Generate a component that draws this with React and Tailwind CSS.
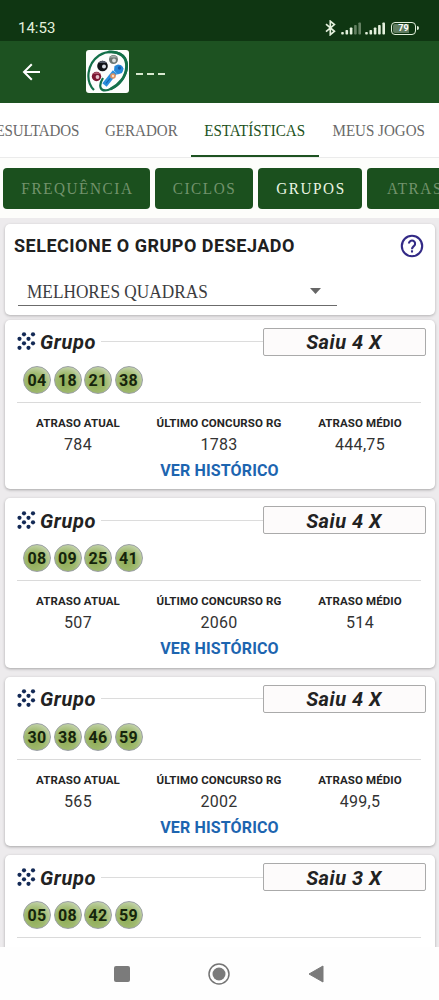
import React from 'react';

const TABS = [
    { label: 'RESULTADOS', box: 'w-[92px] ml-[-14px]', text: 'tracking-[-0.2px]' },
    { label: 'GERADOR', box: 'w-[73px] ml-[27px]', text: '' },
    { label: 'ESTATÍSTICAS', box: 'w-[128px] ml-[13px]', text: '', active: true },
    { label: 'MEUS JOGOS', box: 'w-[92px] ml-[14px]', text: '' },
];

const CHIPS = [
    { label: 'FREQUÊNCIA', box: 'w-[147px]' },
    { label: 'CICLOS', box: 'w-[98px]' },
    { label: 'GRUPOS', box: 'w-[104px]', active: true },
    { label: 'ATRASOS', box: 'w-[117px]' },
];

const GROUPS = [
    { id: 1, balls: ['04', '18', '21', '38'], hits: 4, current: '784', last: '1783', average: '444,75' },
    { id: 2, balls: ['08', '09', '25', '41'], hits: 4, current: '507', last: '2060', average: '514' },
    { id: 3, balls: ['30', '38', '46', '59'], hits: 4, current: '565', last: '2002', average: '499,5' },
    { id: 4, balls: ['05', '08', '42', '59'], hits: 3 },
];

const Signal = ({ level }) => (
    <svg width="20" height="13" viewBox="0 0 20 13" fill="#e3f0dc">
        {[2.5, 4.5, 7, 9.5, 12].map((h, i) => (
            <rect key={h} x={i * 4.3 + 0.2} y={12.5 - h} width="2.6" height={h} rx="0.8" opacity={i < level ? 1 : 0.4} />
        ))}
    </svg>
);

const StatusBar = () => (
    <div className="h-[40.5px] shrink-0 bg-[#0f3612] flex items-start justify-between pl-[18px] pr-[20px] pt-[18px] text-[#e3f0dc]">
        <span className="text-[15px] leading-[20px]">14:53</span>
        <div className="flex items-center h-[20px]">
            <svg className="mr-[5px]" width="11" height="16" viewBox="0 0 11 16" fill="none" stroke="#e3f0dc" strokeWidth="1.7">
                <path d="M1 4.2 9.4 11.3 5.3 14.7V1.2L9.4 4.6 1 11.7" />
            </svg>
            <Signal level={3} />
            <span className="w-[4.5px]" />
            <Signal level={5} />
            <div className="ml-[6px] w-[25px] h-[13px] border-[1.5px] border-[#e3f0dc] rounded-[4px] p-[1px]">
                <div className="h-full w-full rounded-[2px] bg-[linear-gradient(90deg,#5f7c60_75%,transparent_75%)] text-[9px] leading-[9px] font-bold text-center text-white">79</div>
            </div>
            <span className="ml-[1px] w-[2px] h-[4px] rounded-r bg-[#e3f0dc]" />
        </div>
    </div>
);

const Logo = () => (
    <svg width="43" height="43" viewBox="0 0 43 43">
        <rect width="43" height="43" rx="3" fill="#fdfdfc" />
        <path d="M8 40C-1 31 1 14 13 5.5C23-.5 38 1 40.500 12C43 24 33 37 22 40C14 42 12 36 17 28" fill="none" stroke="#14704a" strokeWidth="2.2" />
        <path d="M23 1.800C34 1.500 41 7 40.500 17C40 27 33 35 25 38.700" fill="none" stroke="#14704a" strokeWidth="2.8" strokeLinecap="round" />
        <g>
            <circle cx="27.5" cy="9.5" r="4.500" fill="#6b7773" />
            <path d="M23.500 7.500Q27.500 3.500 31.500 7.500Z" fill="#a4b0ac" />
            <circle cx="28" cy="10.500" r="1.900" fill="#dce0df" />
            <circle cx="16.500" cy="16" r="5.300" fill="#121318" />
            <path d="M12 13Q16.500 8.500 21 13Z" fill="#545967" />
            <circle cx="18" cy="16.500" r="2" fill="#d9dde4" />
            <circle cx="10.500" cy="26.500" r="4.700" fill="#7c1732" />
            <path d="M6.500 24Q10.500 20 14.500 24Z" fill="#a9546b" />
            <circle cx="11.500" cy="27" r="1.900" fill="#e4c2ca" />
        </g>
        <path d="M18.500 35 29 22" stroke="#2c8fdd" strokeWidth="5.500" />
        <path d="M28.500 16 32 14.500 35.500 16 37.500 18.500 36 23 31.500 24.500 28 20.500Z" fill="#2c8fdd" />
        <circle cx="33" cy="19" r="4.300" fill="#2787d8" />
        <circle cx="33.500" cy="18" r="1.700" fill="#1859a5" />
        <path d="M20 33.500 24 28.500" stroke="#1764ae" strokeWidth="1.200" />
        <circle cx="27" cy="26" r="2.800" fill="#dc9060" />
        <circle cx="27" cy="26" r="1.200" fill="#f6e0cb" />
    </svg>
);

const AppBar = () => (
    <div className="h-[62.5px] shrink-0 bg-[#1d5221] flex items-center pl-[22px]">
        <svg width="19" height="18" viewBox="0 0 19 18" fill="none" stroke="#fff" strokeWidth="2">
            <path d="M18 9H2M9.800 1.200 2 9l7.800 7.800" />
        </svg>
        <div className="ml-[45px]"><Logo /></div>
        <div className="ml-[7px] mt-[4px] flex gap-[4px]">
            {[0, 1, 2].map(i => <span key={i} className="w-[7px] h-[1.5px] bg-[#d8e8cf]" />)}
        </div>
    </div>
);

const Tabs = () => (
    <div className="h-[55px] shrink-0 bg-white border-b-[1.5px] border-[#ebebeb] flex overflow-hidden">
        {TABS.map(t => (
            <div key={t.label} className={`${t.box} shrink-0 flex justify-center items-center h-[54px] border-b-[2.5px] ${t.active ? 'border-[#1d5221] text-[#1d5221]' : 'border-transparent text-[#6a6a6a]'}`}>
                <span className={`${t.text} mt-[2px] font-[Liberation_Serif,serif] text-[17.5px] whitespace-nowrap scale-x-[0.86]`}>{t.label}</span>
            </div>
        ))}
    </div>
);

const Chips = () => (
    <div className="h-[60px] shrink-0 bg-[#fdfdfb] flex gap-[5px] pl-[2.5px] pt-[10px] overflow-hidden">
        {CHIPS.map(c => (
            <div key={c.label} className={`${c.box} shrink-0 h-[40.5px] rounded-[4px] bg-[#1b501e] flex items-center justify-center`}>
                <span className={`font-[Liberation_Serif,serif] text-[17.5px] tracking-[1.8px] mr-[-2px] whitespace-nowrap scale-x-[0.87] ${c.active ? 'text-[#eaf5e2]' : 'text-[#72936c]'}`}>{c.label}</span>
            </div>
        ))}
    </div>
);

const Selector = () => (
    <div className="h-[91px] shrink-0 bg-white rounded-[5px] shadow-[0_1px_3px_rgba(0,0,0,0.25)] pl-[9px] pr-[11px] pt-[9.5px]">
        <div className="flex justify-between items-center h-[25px]">
            <span className="text-[18px] leading-[24px] font-bold tracking-[0.5px] text-[#202020]">SELECIONE O GRUPO DESEJADO</span>
            <svg width="24" height="24" viewBox="0 0 24 24" fill="none" stroke="#332a86" strokeWidth="2.100">
                <circle cx="12" cy="12" r="10.200" />
                <path d="M8.900 9.600a3.100 3.100 0 1 1 5.300 2.200C13.200 12.800 12 13.200 12 15.300" />
                <path d="M12 16.300v2.200" />
            </svg>
        </div>
        <div className="ml-[4px] mt-[17px] w-[319px] h-[30.5px] border-b border-[#6b6b6b] flex items-center justify-between pl-[9px] pr-[16px]">
            <span className="mt-[3px] font-[Liberation_Serif,serif] text-[19.5px] text-[#3b3b40] whitespace-nowrap origin-left scale-x-[0.885]">MELHORES QUADRAS</span>
            <svg className="mt-[2px]" width="11" height="6" viewBox="0 0 11 6"><path d="M0 0h11L5.500 6Z" fill="#666" /></svg>
        </div>
    </div>
);

// Staggered dot pattern, one entry per dot
const DOTS = [[7, 2], [16, 2], [2.5, 6.5], [11.5, 6.5], [7, 11], [16, 11], [2.5, 15.5], [11.5, 15.5]];

const DotsIcon = () => (
    <svg width="19" height="19" viewBox="0 0 19 19" fill="#142a56">
        {DOTS.map(([x, y]) => <circle key={`${x}-${y}`} cx={x} cy={y + 0.3} r="2.100" />)}
    </svg>
);

const Ball = ({ n }) => (
    <div className="w-[28px] h-[28px] rounded-full border border-[#9a9fa3] bg-[radial-gradient(circle_at_40%_65%,#8fac57_0%,#a0ba70_45%,#cddabb_85%)] flex items-center justify-center pt-[2px] text-[16px] font-bold tracking-[0.3px] text-[#15240c]">{n}</div>
);

const Stat = ({ label, value, className }) => (
    <div className={`${className} flex flex-col items-center`}>
        <span className="text-[11.5px] leading-[16px] font-bold tracking-[0.1px] text-[#252525] whitespace-nowrap">{label}</span>
        <span className="mt-[4px] text-[16px] leading-[20px] tracking-[0.3px] text-[#333]">{value}</span>
    </div>
);

const GroupCard = ({ group }) => (
    <div className="h-[169.5px] shrink-0 bg-white rounded-[5px] shadow-[0_1px_3px_rgba(0,0,0,0.3)] pl-[12px] pr-[9px] pt-[8px]">
        <div className="flex items-center h-[28px]">
            <DotsIcon />
            <span className="ml-[4px] mt-[1px] w-[57px] text-[20px] font-bold italic tracking-[0.6px] text-[#222]">Grupo</span>
            <span className="ml-[4px] flex-1 h-px bg-[#dcdcdc]" />
            <div className="w-[163px] h-[28px] border-[1.5px] border-[#aaa] rounded-[2px] bg-[#fdfbfb] flex items-center justify-center pt-[1px] text-[20px] font-bold italic tracking-[0.5px] text-[#222]">Saiu {group.hits} X</div>
        </div>
        <div className="ml-[6px] mt-[10px] flex gap-[2.5px]">
            {group.balls.map(n => <Ball key={n} n={n} />)}
        </div>
        <div className="mt-[8px] mr-[5px] h-px bg-[#dadada]" />
        {group.last && (
            <>
                <div className="mt-[12px] ml-[0.5px] flex">
                    <Stat className="w-[121px]" label="ATRASO ATUAL" value={group.current} />
                    <Stat className="w-[161px]" label="ÚLTIMO CONCURSO RG" value={group.last} />
                    <Stat className="w-[121px]" label="ATRASO MÉDIO" value={group.average} />
                </div>
                <div className="mt-[6px] ml-[1px] w-[403px] text-center text-[16px] leading-[20px] font-bold tracking-[0.15px] text-[#1d65b0]">VER HISTÓRICO</div>
            </>
        )}
    </div>
);

const NavBar = () => (
    <div className="h-[53px] shrink-0 bg-[#fefefe] flex items-center pl-[114px]">
        <span className="w-[16px] h-[16px] rounded-[2px] bg-[#7b7b7b]" />
        <svg className="ml-[78px]" width="22" height="22" viewBox="0 0 22 22">
            <circle cx="11" cy="11" r="10" fill="none" stroke="#747474" strokeWidth="1.500" />
            <circle cx="11" cy="11" r="6.500" fill="#7b7b7b" />
        </svg>
        <svg className="ml-[78px]" width="16" height="18" viewBox="0 0 16 18"><path d="M1 9 15 1v16Z" fill="#7b7b7b" stroke="#7b7b7b" strokeWidth="1" strokeLinejoin="round" /></svg>
    </div>
);

const App = () => (
    <div className="h-screen w-full overflow-hidden flex flex-col bg-[#edebed] font-[Roboto,sans-serif]">
        <StatusBar />
        <AppBar />
        <Tabs />
        <Chips />
        <div className="flex-1 min-h-0 overflow-hidden flex flex-col pl-[5px] pr-[4.5px] pt-[6px]">
            <Selector />
            <div className="mt-[4.5px] flex flex-col gap-[9px]">
                {GROUPS.map(g => <GroupCard key={g.id} group={g} />)}
            </div>
        </div>
        <NavBar />
    </div>
);

export default App;
